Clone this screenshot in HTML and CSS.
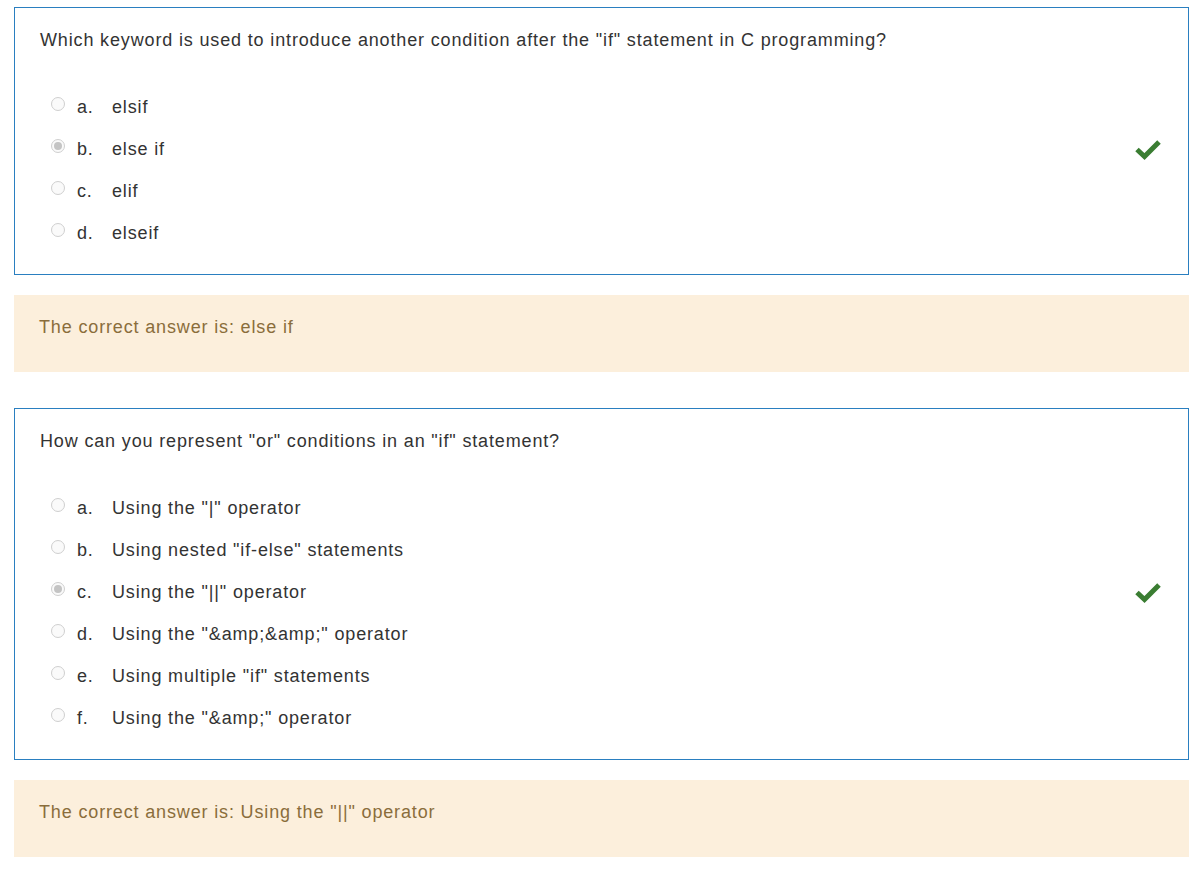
FILE: index.html
```html
<!DOCTYPE html>
<html>
<head>
<meta charset="utf-8">
<link rel="stylesheet" href="styles.css">
</head>
<body>
<div class="que">
  <div class="qtext">Which keyword is used to introduce another condition after the "if" statement in C programming?</div>
  <div class="answers">
    <div class="opt"><span class="radio"></span><span class="letter">a.</span><span class="label">elsif</span></div>
    <div class="opt"><span class="radio checked"></span><span class="letter">b.</span><span class="label">else if</span>
      <svg class="tick" viewBox="0 0 28 22" width="28" height="22"><path d="M3 11.5 L10.5 18.5 L25 4" fill="none" stroke="#3a7d32" stroke-width="5" stroke-linecap="butt" stroke-linejoin="miter"/></svg>
    </div>
    <div class="opt"><span class="radio"></span><span class="letter">c.</span><span class="label">elif</span></div>
    <div class="opt"><span class="radio"></span><span class="letter">d.</span><span class="label">elseif</span></div>
  </div>
</div>
<div class="feedback">The correct answer is: else if</div>

<div class="que second">
  <div class="qtext">How can you represent "or" conditions in an "if" statement?</div>
  <div class="answers">
    <div class="opt"><span class="radio"></span><span class="letter">a.</span><span class="label">Using the "|" operator</span></div>
    <div class="opt"><span class="radio"></span><span class="letter">b.</span><span class="label">Using nested "if-else" statements</span></div>
    <div class="opt"><span class="radio checked"></span><span class="letter">c.</span><span class="label">Using the "||" operator</span>
      <svg class="tick" viewBox="0 0 28 22" width="28" height="22"><path d="M3 11.5 L10.5 18.5 L25 4" fill="none" stroke="#3a7d32" stroke-width="5" stroke-linecap="butt" stroke-linejoin="miter"/></svg>
    </div>
    <div class="opt"><span class="radio"></span><span class="letter">d.</span><span class="label">Using the "&amp;amp;&amp;amp;" operator</span></div>
    <div class="opt"><span class="radio"></span><span class="letter">e.</span><span class="label">Using multiple "if" statements</span></div>
    <div class="opt"><span class="radio"></span><span class="letter">f.</span><span class="label">Using the "&amp;amp;" operator</span></div>
  </div>
</div>
<div class="feedback">The correct answer is: Using the "||" operator</div>
</body>
</html>
```

FILE: styles.css
```css
html, body {
  background: #ffffff;
}
body {
  margin: 7px 8px 0 14px;
  font-family: "Liberation Sans", Arial, sans-serif;
  font-size: 18px;
  letter-spacing: 0.85px;
  color: #333333;
}
.que {
  border: 1px solid #2a7fc0;
  padding: 19px 26px 20px 25px;
}
.que.second {
  margin-top: 36px;
}
.qtext {
  line-height: 27px;
}
.answers {
  margin-top: 32px;
}
.opt {
  display: flex;
  align-items: center;
  height: 42px;
}
.radio {
  width: 12px;
  height: 12px;
  border: 1px solid #cfcfcf;
  border-radius: 50%;
  background: #fafafa;
  margin-left: 11px;
  margin-right: 12px;
  margin-top: -6px;
  box-sizing: content-box;
  flex: none;
  position: relative;
}
.radio.checked::after {
  content: "";
  position: absolute;
  left: 2px;
  top: 2px;
  width: 8px;
  height: 8px;
  border-radius: 50%;
  background: #c4c4c4;
}
.letter {
  width: 35px;
  flex: none;
}
.label {
  flex: 1;
}
.tick {
  flex: none;
  margin-right: 0;
}
.feedback {
  margin-top: 20px;
  background: #fcefdc;
  color: #8a6d3b;
  padding: 19px 25px 31px 25px;
  line-height: 27px;
}
```
